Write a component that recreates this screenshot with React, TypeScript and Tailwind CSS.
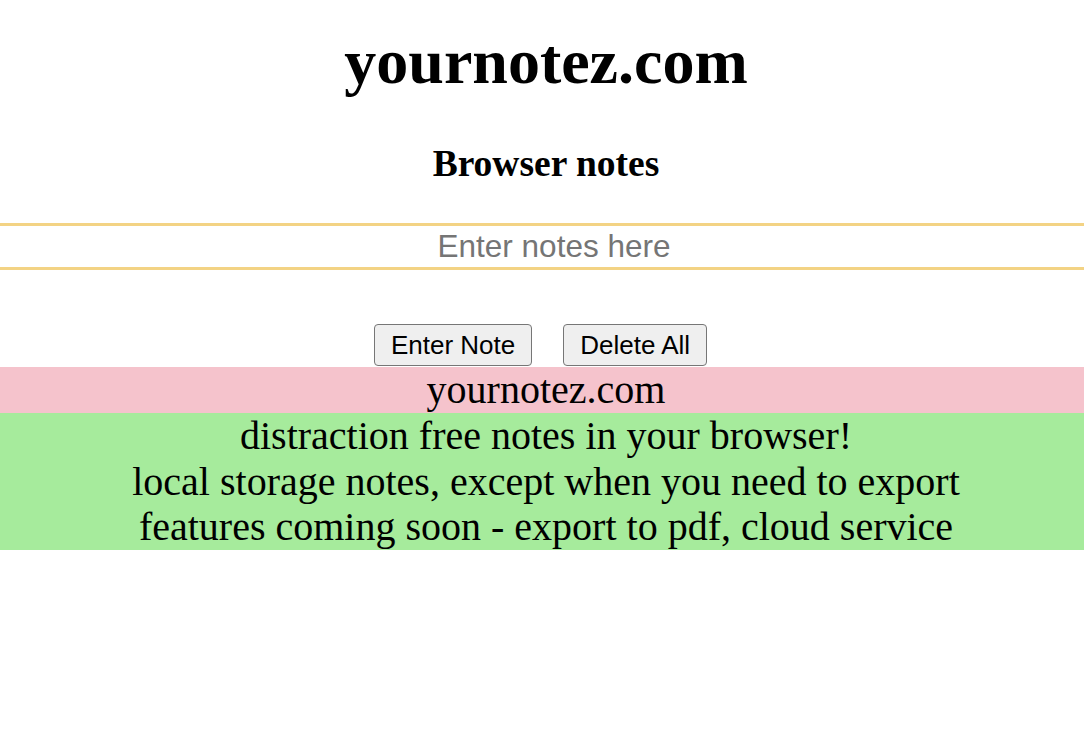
/**
 * yournotez.com — browser notes landing page
 */

const serif = "font-['Liberation_Serif','Times_New_Roman',serif]";
const sans = "font-['Liberation_Sans',Arial,sans-serif]";

function NoteButton({ label }: { label: string }) {
  return (
    <button
      type="button"
      className={`${sans} h-[42px] rounded-[4px] border border-[#767676] bg-[#efefef] px-[16px] text-[26px] leading-none text-black`}
    >
      {label}
    </button>
  );
}

export default function App() {
  return (
    <div className="min-h-[756px] w-full bg-white text-black">
      {/* Header */}
      <h1 className={`${serif} mt-[25px] pl-2 text-center text-[64px] font-bold leading-[74px]`}>
        yournotez.com
      </h1>
      <h2 className={`${serif} mt-[44px] pl-2 text-center text-[37.5px] font-bold leading-[41px]`}>
        Browser notes
      </h2>

      {/* Note input */}
      <input
        type="text"
        placeholder="Enter notes here"
        className={`${sans} mt-[39px] block h-[47px] w-full border-y-[3px] border-[#f3d384] bg-white pl-[24px] text-center text-[31.5px] text-black outline-none placeholder:text-[#757575]`}
      />

      {/* Actions */}
      <div className="mt-[54px] flex justify-center gap-[31px] pr-[3px]">
        <NoteButton label="Enter Note" />
        <NoteButton label="Delete All" />
      </div>

      {/* Notes */}
      <div className={`${serif} mt-px text-center text-[40px] leading-[46px]`}>
        <div className="bg-[#f5c3cc] pl-2">yournotez.com</div>
        <div className="bg-[#a6eb9c] pl-2 leading-[45.7px]">
          <div>distraction free notes in your browser!</div>
          <div>local storage notes, except when you need to export</div>
          <div>features coming soon - export to pdf, cloud service</div>
        </div>
      </div>
    </div>
  );
}
